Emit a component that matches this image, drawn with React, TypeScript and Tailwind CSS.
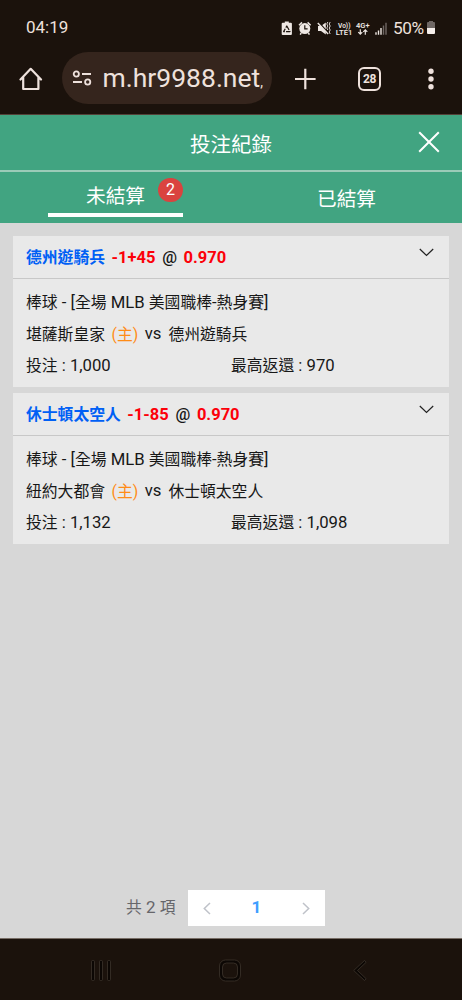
import React from "react";

type Bet = {
  team: string;
  line: string;
  odds: string;
  home: string;
  stake: string;
  payout: string;
};

const bets: Bet[] = [
  { team: "德州遊騎兵", line: "-1+45", odds: "0.970", home: "堪薩斯皇家", stake: "1,000", payout: "970" },
  { team: "休士頓太空人", line: "-1-85", odds: "0.970", home: "紐約大都會", stake: "1,132", payout: "1,098" },
];

function StatusIcons() {
  return (
    <svg width="108" height="18" viewBox="280 18 108 18" className="block">
      <g fill="#eee7e3">
        <path d="M284.800 20.500h4v1.200h2.100q1 0 1 1v10.200q0 1-1 1h-8.200q-1 0-1-1V22.700q0-1 1-1h2.100z" />
        <path d="M286.800 25l3.200 5.600h-6.400z" fill="none" stroke="#1b120c" strokeWidth="1.200" strokeLinejoin="round" strokeDasharray="4.600 1.200" />
        <circle cx="304.800" cy="27.600" r="5.500" />
        <path d="M299 24.200l3-2.800M310.600 24.200l-3-2.800M301.200 32l-1 1.600M308.400 32l1 1.600" stroke="#eee7e3" strokeWidth="1.500" />
        <path d="M304.800 24.300v3.500h2.800" fill="none" stroke="#1b120c" strokeWidth="1.200" />
        <path d="M318 25h3l4.800-3.500v12L321 30h-3z" />
        <path d="M318.800 21.300l10.500 12" stroke="#1b120c" strokeWidth="1.500" />
        <path d="M317.800 22l10.300 11" stroke="#eee7e3" strokeWidth="1.400" />
        <path d="M327.800 21l-1 2 1 2-1 2 1 2M330.200 21l-1 2 1 2-1 2 1 2-1 2 1 2" fill="none" stroke="#eee7e3" strokeWidth=".9" />
        <text x="338" y="26.500" fontSize="7.500" fontWeight="600" textLength="12.500" lengthAdjust="spacingAndGlyphs">Vo))</text>
        <text x="335.800" y="33.800" fontSize="8" fontWeight="600" textLength="16.500" lengthAdjust="spacingAndGlyphs">LTE1</text>
        <text x="356" y="26.500" fontSize="7.500" fontWeight="600" textLength="13.500" lengthAdjust="spacingAndGlyphs">4G+</text>
        <path d="M360.300 28.200v4.800M358.300 31.100l2 2 2-2M365.300 33.700v-4.800M363.300 30.800l2-2 2 2" fill="none" stroke="#eee7e3" strokeWidth="1.200" />
        <path d="M375.300 31.200h1.400v2.500h-1.400zM377.800 29.400h1.400v4.300h-1.400zM380.300 27h1.400v6.700h-1.400z" />
        <path d="M382.800 24.500h1.400v9.200h-1.400zM385.300 21.800h1.400v11.900h-1.400z" fill="#6f6764" />
      </g>
    </svg>
  );
}

function BetCard({ bet }: { bet: Bet }) {
  return (
    <article className="h-[151px] bg-[#e9e9e9] text-[15.8px] text-[#171717]">
      <header className="flex h-[43px] items-center justify-between border-b border-[#c8c8c8] pl-[13px] pr-[15px] font-bold">
        <div className="flex items-baseline whitespace-nowrap leading-6">
          <span className="pt-[1px] text-[#0060f5]">{bet.team}</span>
          <span className="ml-[6.5px] text-[16.5px] text-[#fc0009]">{bet.line}</span>
          <span className="ml-[6.8px] text-[16.5px] font-medium">@</span>
          <span className="ml-[6.6px] text-[16.5px] text-[#fc0009]">{bet.odds}</span>
        </div>
        <svg width="15" height="9" viewBox="0 0 15 9" className="mb-[10px] block">
          <path d="M.8 1l6.700 6.500L14.200 1" fill="none" stroke="#222" strokeWidth="1.200" />
        </svg>
      </header>
      <div className="px-[13px] pt-[8px] leading-[31.6px]">
        <p className="flex h-[31.6px] items-baseline whitespace-pre">
          <span>棒球</span>
          <span className="text-[16.7px]"> - [</span>
          <span>全場</span>
          <span className="text-[16.7px]"> MLB </span>
          <span>美國職棒</span>
          <span className="text-[16.7px]">-</span>
          <span>熱身賽</span>
          <span className="text-[16.7px]">]</span>
        </p>
        <p className="flex h-[31.6px] items-baseline whitespace-nowrap">
          <span>{bet.home}</span>
          <span className="ml-[6.5px] text-[#ff8c16]">(主)</span>
          <span className="relative -top-px ml-[6.5px] text-[16.7px]">vs</span>
          <span className="ml-[7px]">{bet.team}</span>
        </p>
        <div className="grid h-[31.6px] grid-cols-2 whitespace-pre">
          <span className="flex items-baseline">投注<span className="text-[16.7px]"> : {bet.stake}</span></span>
          <span className="flex items-baseline">最高返還<span className="text-[16.7px]"> : {bet.payout}</span></span>
        </div>
      </div>
    </article>
  );
}

export default function App() {
  return (
    <div className="flex h-[1000px] w-[462px] flex-col overflow-hidden bg-[#d7d7d7] font-[Roboto,'Noto_Sans_CJK_TC',sans-serif]">
      <div className="h-[115px] shrink-0 border-b border-[#534138] bg-[#1b120c] text-[#eee1dc]">
        <div className="flex h-[52px] items-center pl-[26px] pt-[3px]">
          <time className="text-[17px]">04:19</time>
          <div className="ml-auto flex w-[182px] items-center">
            <StatusIcons />
            <span className="ml-[5px] w-[31px] text-[17.2px] leading-5 tracking-[-0.4px]">50%</span>
            <svg width="10" height="15" viewBox="0 0 10 15" className="ml-[2px] block">
              <path d="M3 1h4v1h1q1 0 1 1v5H1V3q0-1 1-1h1z" fill="#6f6764" />
              <path d="M1 8h8v5q0 1-1 1H2q-1 0-1-1z" fill="#f5eeeb" />
            </svg>
          </div>
        </div>
        <div className="flex h-[52px] items-center">
          <svg width="24" height="24" viewBox="0 0 24 24" className="ml-[19px] mt-px block">
            <path d="M1.500 12.500L11.700 1.800 22 12.500M4.200 10v12h15.200V10" fill="none" stroke="#eee1dc" strokeWidth="2.200" strokeLinejoin="round" strokeLinecap="round" />
          </svg>
          <div className="ml-[19px] flex h-[52px] w-[210px] items-center rounded-full bg-[#35251d]">
            <svg width="20" height="16" viewBox="0 0 20 16" className="ml-[10px] block">
              <g fill="none" stroke="#eee1dc" strokeWidth="1.800">
                <circle cx="4.300" cy="4" r="2.600" />
                <path d="M10 4h9M1 12h9" />
                <circle cx="15.700" cy="12" r="2.600" />
              </g>
            </svg>
            <span className="ml-[10.5px] flex items-baseline whitespace-nowrap pt-[4px] text-[26.5px] leading-[34px]">
              m.hr9988.net<span className="text-[14px]">,</span>
            </span>
          </div>
          <svg width="22" height="22" viewBox="0 0 22 22" className="ml-[22px] mt-px block">
            <path d="M11.300 .7v20.600M1 11h20.600" stroke="#eee1dc" strokeWidth="2.200" />
          </svg>
          <div className="ml-[42px] mt-px flex h-[24px] w-[23px] items-center justify-center rounded-[6px] border-2 border-[#eee1dc] text-[12px] font-bold tracking-[-0.4px]">28</div>
          <svg width="6" height="22" viewBox="0 0 6 22" className="ml-[47px] mt-px block">
            <g fill="#eee1dc">
              <circle cx="3" cy="3.300" r="2.700" />
              <circle cx="3" cy="11" r="2.700" />
              <circle cx="3" cy="18.700" r="2.700" />
            </g>
          </svg>
        </div>
      </div>

      <header className="flex h-[57px] shrink-0 items-center border-b-2 border-[#9bcbb8] bg-[#41a481] text-white">
        <h1 className="ml-[190px] mt-[5px] text-[20.5px] leading-7">投注紀錄</h1>
        <svg width="22" height="22" viewBox="0 0 22 22" className="mb-px ml-auto mr-[22px] block">
          <path d="M1.200 1.200l19.600 19.600M20.800 1.200L1.200 20.800" stroke="white" strokeWidth="2" />
        </svg>
      </header>

      <nav className="grid h-[51px] shrink-0 grid-cols-2 bg-[#41a481] text-[19.7px] text-white">
        <div className="flex justify-center">
          <div className="relative flex h-[45px] w-[135px] items-center justify-center border-b-4 border-white pt-[8px]">
            未結算
            <span className="absolute right-0 top-[6px] flex h-[24px] w-[25px] items-center justify-center rounded-full bg-[#da433f] text-[16px]">2</span>
          </div>
        </div>
        <div className="flex items-center justify-center pt-[5px]">已結算</div>
      </nav>

      <main className="flex flex-1 flex-col gap-[6px] px-[13px] pt-[13px]">
        {bets.map((bet) => <BetCard key={bet.team} bet={bet} />)}
        <div className="mb-[12px] mt-auto flex h-[36px] items-center pl-[113px] text-[#66666a]">
          <span className="flex w-[62px] items-baseline whitespace-pre text-[15.8px]">共<span className="text-[17px]"> 2 </span>項</span>
          <div className="flex h-[36px] w-[137px] items-center justify-between bg-white px-[15px]">
            <svg width="8" height="13" viewBox="0 0 8 13"><path d="M7 1L1.300 6.500 7 12" fill="none" stroke="#bfc2c9" strokeWidth="1.500" /></svg>
            <span className="font-[Roboto] text-[17px] font-bold text-[#409eff]">1</span>
            <svg width="8" height="13" viewBox="0 0 8 13"><path d="M1 1l5.700 5.500L1 12" fill="none" stroke="#bfc2c9" strokeWidth="1.500" /></svg>
          </div>
        </div>
      </main>

      <footer className="flex h-[62px] shrink-0 items-center border-t border-[#776d65] bg-[#1b120c]">
        <svg width="462" height="40" viewBox="0 0 462 40" className="block">
          <g fill="#0c0704" stroke="#423931" strokeWidth=".7">
            <rect x="91.500" y="10.500" width="3" height="20" rx="1" />
            <rect x="99.500" y="10.500" width="3" height="20" rx="1" />
            <rect x="107.500" y="10.500" width="3" height="20" rx="1" />
            <rect x="219.500" y="10" width="21" height="21" rx="6" />
            <rect x="222.500" y="13" width="15" height="15" rx="4" fill="#1b120c" />
            <path d="M364.500 10.500l1.600 1.800-8.600 8.200 8.600 8.200-1.600 1.800-10.800-10z" />
          </g>
        </svg>
      </footer>
    </div>
  );
}
